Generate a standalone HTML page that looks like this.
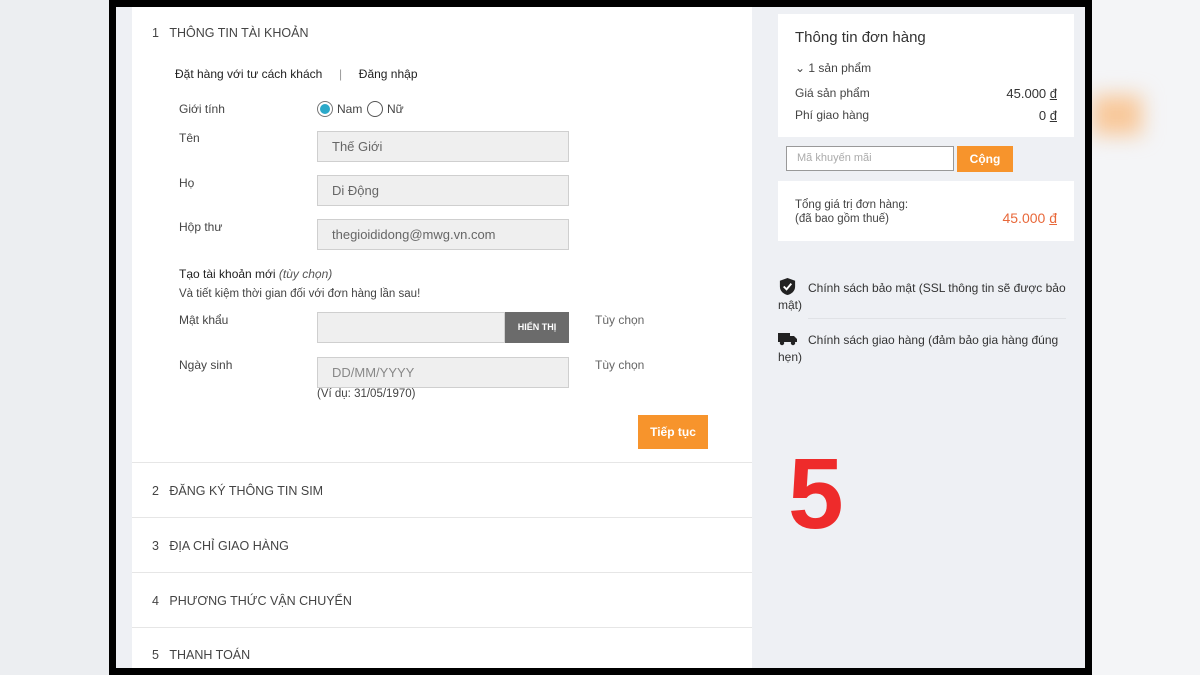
<!DOCTYPE html><html><head><meta charset="utf-8"><style>
*{margin:0;padding:0;box-sizing:border-box}
body{width:1200px;height:675px;overflow:hidden;background:#f4f5f7;font-family:"Liberation Sans",sans-serif;color:#333;position:relative}
.a{position:absolute}
.frame{left:109px;top:0;width:983px;height:675px;background:#000}
.inner{left:116px;top:7px;width:969px;height:661px;background:#eef0f4}
.left{left:132px;top:7px;width:620px;height:661px;background:#fff}
.t{font-size:12px;color:#444}
.inp{background:#efefef;border:1px solid #cfcfcf;font-size:13px;color:#666;padding-left:14px;line-height:29px}
.sec{left:132px;width:620px;height:1px;background:#e6e6e6}
.hd{font-size:12.5px;color:#444}
</style></head><body>
<div class="a" style="left:0;top:0;width:109px;height:675px;background:#eceef1"></div>
<div class="a" style="left:1092px;top:95px;width:50px;height:40px;background:#f8c89a;filter:blur(10px)"></div>
<div class="a frame"></div>
<div class="a inner"></div>
<div class="a left"></div>
<div class="a hd" style="left:152px;top:26px">1&nbsp;&nbsp;&nbsp;THÔNG TIN TÀI KHOẢN</div>
<div class="a t" style="left:175px;top:67px;color:#222">Đặt hàng với tư cách khách&nbsp;&nbsp;&nbsp;&nbsp;&nbsp;<span style="color:#999">|</span>&nbsp;&nbsp;&nbsp;&nbsp;&nbsp;Đăng nhập</div>
<div class="a t" style="left:179px;top:102px">Giới tính</div>
<div class="a" style="left:317px;top:101px;width:16px;height:16px;border-radius:50%;border:1px solid #777;background:#fff"><div style="margin:2px;width:10px;height:10px;border-radius:50%;background:#2ba9c9"></div></div>
<div class="a t" style="left:337px;top:102px">Nam</div>
<div class="a" style="left:367px;top:101px;width:16px;height:16px;border-radius:50%;border:1px solid #555"></div>
<div class="a t" style="left:387px;top:102px">Nữ</div>
<div class="a t" style="left:179px;top:131px">Tên</div>
<div class="a inp" style="left:317px;top:131px;width:252px;height:31px">Thế Giới</div>
<div class="a t" style="left:179px;top:176px">Họ</div>
<div class="a inp" style="left:317px;top:175px;width:252px;height:31px">Di Động</div>
<div class="a t" style="left:179px;top:220px">Hộp thư</div>
<div class="a inp" style="left:317px;top:219px;width:252px;height:31px">thegioididong@mwg.vn.com</div>
<div class="a t" style="left:179px;top:267px;color:#222">Tạo tài khoản mới <i style="color:#555">(tùy chọn)</i></div>
<div class="a t" style="left:179px;top:288px;font-size:11.5px">Và tiết kiệm thời gian đối với đơn hàng lần sau!</div>
<div class="a t" style="left:179px;top:313px">Mật khẩu</div>
<div class="a inp" style="left:317px;top:312px;width:188px;height:31px"></div>
<div class="a" style="left:505px;top:312px;width:64px;height:31px;background:#6b6b6b;color:#fff;font-size:9px;font-weight:bold;text-align:center;line-height:31px">HIỂN THỊ</div>
<div class="a t" style="left:595px;top:313px;color:#666">Tùy chọn</div>
<div class="a t" style="left:179px;top:358px">Ngày sinh</div>
<div class="a inp" style="left:317px;top:357px;width:252px;height:31px;color:#888">DD/MM/YYYY</div>
<div class="a t" style="left:595px;top:358px;color:#666">Tùy chọn</div>
<div class="a t" style="left:317px;top:388px;font-size:11.5px">(Ví dụ: 31/05/1970)</div>
<div class="a" style="left:638px;top:415px;width:70px;height:34px;background:#f7942c;color:#fff;font-size:12px;font-weight:bold;text-align:center;line-height:34px">Tiếp tục</div>
<div class="a sec" style="top:462px"></div>
<div class="a hd" style="left:152px;top:484px">2&nbsp;&nbsp;&nbsp;ĐĂNG KÝ THÔNG TIN SIM</div>
<div class="a sec" style="top:517px"></div>
<div class="a hd" style="left:152px;top:539px">3&nbsp;&nbsp;&nbsp;ĐỊA CHỈ GIAO HÀNG</div>
<div class="a sec" style="top:572px"></div>
<div class="a hd" style="left:152px;top:594px">4&nbsp;&nbsp;&nbsp;PHƯƠNG THỨC VẬN CHUYỂN</div>
<div class="a sec" style="top:627px"></div>
<div class="a hd" style="left:152px;top:648px">5&nbsp;&nbsp;&nbsp;THANH TOÁN</div>

<div class="a" style="left:778px;top:14px;width:296px;height:123px;background:#fff"></div>
<div class="a" style="left:795px;top:29px;font-size:15px;color:#333">Thông tin đơn hàng</div>
<div class="a t" style="left:795px;top:61px">⌄ 1 sản phẩm</div>
<div class="a t" style="left:795px;top:86px">Giá sản phẩm</div>
<div class="a t" style="left:1000px;top:86px;font-size:13px;color:#333;width:57px;text-align:right">45.000 <u>đ</u></div>
<div class="a t" style="left:795px;top:108px">Phí giao hàng</div>
<div class="a t" style="left:1000px;top:108px;font-size:13px;color:#333;width:57px;text-align:right">0 <u>đ</u></div>
<div class="a" style="left:786px;top:146px;width:168px;height:25px;background:#fff;border:1px solid #999;font-size:11px;color:#aaa;padding-left:10px;line-height:23px">Mã khuyến mãi</div>
<div class="a" style="left:957px;top:146px;width:56px;height:26px;background:#f7942c;color:#fff;font-size:12px;font-weight:bold;text-align:center;line-height:26px">Cộng</div>
<div class="a" style="left:778px;top:181px;width:296px;height:60px;background:#fff"></div>
<div class="a t" style="left:795px;top:198px;font-size:11.5px;line-height:14px">Tổng giá trị đơn hàng:<br>(đã bao gồm thuế)</div>
<div class="a" style="left:980px;top:210px;font-size:14px;color:#e8683a;width:77px;text-align:right">45.000 <u>đ</u></div>
<svg class="a" style="left:778px;top:277px" width="19" height="19" viewBox="0 0 20 20"><path d="M10 1L2 4v6c0 5 4 8 8 9 4-1 8-4 8-9V4z" fill="#222"/><path d="M6 10l3 3 5-6" stroke="#fff" stroke-width="2" fill="none"/></svg>
<div class="a t" style="left:778px;top:280px;width:290px;line-height:17px;color:#333">&nbsp;&nbsp;&nbsp;&nbsp;&nbsp;&nbsp;&nbsp;&nbsp;&nbsp;Chính sách bảo mật (SSL thông tin sẽ được bảo mật)</div>
<div class="a" style="left:808px;top:318px;width:258px;height:1px;background:#e0e2e6"></div>
<svg class="a" style="left:778px;top:331px" width="20" height="16" viewBox="0 0 20 16"><rect x="0" y="2" width="12" height="9" fill="#222"/><path d="M12 5h4l3 3v3h-7z" fill="#222"/><circle cx="4" cy="12" r="2.2" fill="#222"/><circle cx="15" cy="12" r="2.2" fill="#222"/></svg>
<div class="a t" style="left:778px;top:332px;width:290px;line-height:17px;color:#333">&nbsp;&nbsp;&nbsp;&nbsp;&nbsp;&nbsp;&nbsp;&nbsp;&nbsp;Chính sách giao hàng (đảm bảo gia hàng đúng hẹn)</div>
<div class="a" style="left:788px;top:434px;font-size:100px;font-weight:bold;color:#ee2b2b;line-height:120px">5</div>
</body></html>
